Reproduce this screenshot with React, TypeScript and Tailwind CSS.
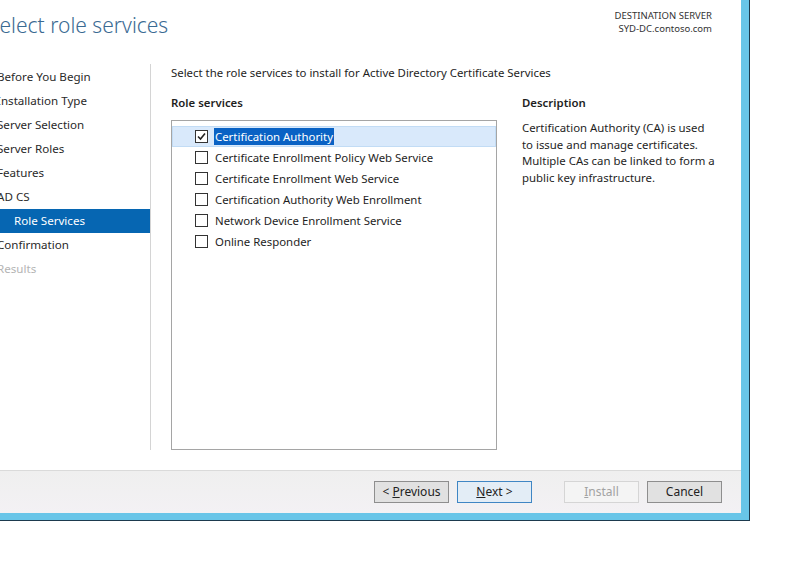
const navItems = [
  { label: "Before You Begin" },
  { label: "Installation Type" },
  { label: "Server Selection" },
  { label: "Server Roles" },
  { label: "Features" },
  { label: "AD CS" },
  { label: "Role Services", sub: true, active: true },
  { label: "Confirmation" },
  { label: "Results", disabled: true },
];

const services = [
  { label: "Certification Authority", checked: true },
  { label: "Certificate Enrollment Policy Web Service" },
  { label: "Certificate Enrollment Web Service" },
  { label: "Certification Authority Web Enrollment" },
  { label: "Network Device Enrollment Service" },
  { label: "Online Responder" },
];

const CheckBox = ({ checked }: { checked?: boolean }) => (
  <span className="flex items-center justify-center w-[13px] h-[13px] border border-[#333333] bg-white shrink-0">
    {checked && (
      <svg width="9" height="9" viewBox="0 0 9 9">
        <path d="M1 4.5 L3.5 7 L8 1.5" fill="none" stroke="#222" strokeWidth="1.6" />
      </svg>
    )}
  </span>
);

const WizButton = ({ children, primary, disabled }: { children: React.ReactNode; primary?: boolean; disabled?: boolean }) => (
  <button
    className={
      "w-[75px] h-[22px] text-[12px] leading-none border " +
      (disabled
        ? "bg-[#f4f4f4] border-[#d5d5d5] text-[#a2a2a2]"
        : primary
        ? "bg-[#e3edf6] border-[#3f86c4] text-[#222]"
        : "bg-[#e1e1e1] border-[#8e8e8e] text-[#222]")
    }
  >
    {children}
  </button>
);

export default function App() {
  return (
    <div className="w-[800px] h-[567px] bg-white font-['Noto_Sans',sans-serif] text-[#1e1e1e]">
      <div className="w-[750px] h-[521px] border-r border-b border-[#1d3a4e]">
        <div className="w-[749px] h-[520px] border-r-[8px] border-b-[7px] border-[#68c5e8] flex flex-col">
          <div className="h-[470px] bg-white overflow-hidden flex flex-col">
            <div className="flex justify-between h-[65px]">
              <h1 className="ml-[-12px] mt-[10px] text-[21px] leading-[30px] font-light text-[#3a6a92]">
                Select role services
              </h1>
              <div className="mt-[9px] mr-[29px] text-right text-[9.5px] leading-[13px] text-[#333]">
                <div>DESTINATION SERVER</div>
                <div>SYD-DC.contoso.com</div>
              </div>
            </div>
            <div className="flex flex-1 pb-[20px]">
              <nav className="w-[150px] text-[11.6px]">
                {navItems.map((it) => (
                  <div
                    key={it.label}
                    className={
                      "h-[24px] flex items-center " +
                      (it.sub ? "pl-[14px] " : "pl-0 ml-[-3px] ") +
                      (it.active ? "bg-[#0666b2] text-white" : it.disabled ? "text-[#b4b4b4]" : "text-[#2a2a2a]")
                    }
                  >
                    {it.label}
                  </div>
                ))}
              </nav>
              <div className="w-[1px] bg-[#d4d4d4] mt-[-1px]" />
              <main className="flex-1 pl-[20px] text-[11.4px]">
                <p className="h-[20px] leading-[16px]">
                  Select the role services to install for Active Directory Certificate Services
                </p>
                <div className="flex gap-[25px] mt-[10px]">
                  <section className="w-[326px] flex flex-col">
                    <h2 className="font-semibold h-[25px] leading-[16px]">Role services</h2>
                    <div className="h-[330px] border border-[#a5a5a5] pt-[5px]">
                      {services.map((s) => (
                        <div
                          key={s.label}
                          className={
                            "h-[21px] flex items-center gap-[6px] pl-[22px] border " +
                            (s.checked ? "bg-[#d9e9fb] border-[#c2dcf5]" : "border-transparent")
                          }
                        >
                          <CheckBox checked={s.checked} />
                          <span className={s.checked ? "bg-[#0a62c4] text-white px-[1px]" : "px-[1px]"}>{s.label}</span>
                        </div>
                      ))}
                    </div>
                  </section>
                  <section className="w-[205px]">
                    <h2 className="font-semibold h-[18px] leading-[16px]">Description</h2>
                    <p className="mt-[7px] leading-[16.5px]">
                      Certification Authority (CA) is used
                      <br />
                      to issue and manage certificates.
                      <br />
                      Multiple CAs can be linked to form a
                      <br />
                      public key infrastructure.
                    </p>
                  </section>
                </div>
              </main>
            </div>
          </div>
          <footer className="flex-1 border-t border-[#dadada] bg-gradient-to-b from-[#efefef] to-[#f3f1f4] flex items-start justify-end pt-[10px] pr-[19px]">
            <div className="flex gap-[8px]">
              <WizButton>
                &lt; <u>P</u>revious
              </WizButton>
              <WizButton primary>
                <u>N</u>ext &gt;
              </WizButton>
              <div className="w-[16px]" />
              <WizButton disabled>
                <u>I</u>nstall
              </WizButton>
              <WizButton>Cancel</WizButton>
            </div>
          </footer>
        </div>
      </div>
    </div>
  );
}
